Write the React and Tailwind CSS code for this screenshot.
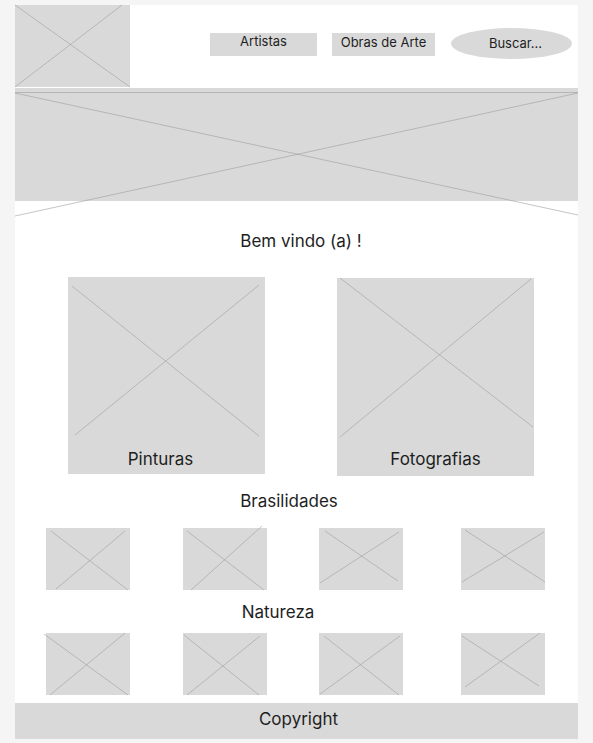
const LINE = "#9e9e9e";

function Placeholder({ w, h, lines, className = "", children }) {
  return (
    <div
      className={`relative bg-[#d9d9d9] ${className}`}
      style={{ width: w, height: h }}
    >
      <svg
        className="absolute inset-0 overflow-visible pointer-events-none"
        width={w}
        height={h}
      >
        {lines.map((l, i) => (
          <line
            key={i}
            x1={l[0]}
            y1={l[1]}
            x2={l[2]}
            y2={l[3]}
            stroke={LINE}
            strokeWidth="0.6"
          />
        ))}
      </svg>
      {children}
    </div>
  );
}

const row1 = [
  [[5, 3, 82, 62], [79, 3, 10, 61]],
  [[4, 3, 81, 62], [79, -2, 8, 62]],
  [[6, 3, 79, 53], [80, 4, 1, 55]],
  [[4, 2, 84, 54], [83, 4, 1, 54]],
];

const row2 = [
  [[-2, 1, 82, 62], [79, 0, 4, 62]],
  [[1, 2, 76, 62], [77, 3, 4, 62]],
  [[5, 3, 80, 62], [81, 3, 1, 61]],
  [[1, 3, 78, 53], [79, 0, 4, 54]],
];

function ThumbRow({ items }) {
  const margins = ["ml-[31px]", "ml-[53px]", "ml-[52px]", "ml-[58px]"];
  return (
    <div className="flex">
      {items.map((lines, i) => (
        <Placeholder key={i} w={84} h={62} lines={lines} className={margins[i]} />
      ))}
    </div>
  );
}

export default function App() {
  return (
    <div
      className="min-h-[743px] bg-[#f5f5f5] pt-[5px] pl-[15px] text-[#1e1e1e]"
      style={{ fontFamily: "Inter, 'Noto Sans', sans-serif" }}
    >
      <div className="w-[563px] bg-white">
        {/* Header */}
        <div className="flex items-start h-[82px]">
          <Placeholder w={115} h={82} lines={[[0, 0, 115, 82], [107, 0, 0, 82]]} />
          <div className="flex items-start ml-[80px] mt-[28px]">
            <div className="w-[107px] h-[23px] bg-[#d9d9d9] text-center text-[13px] leading-[16px]">
              Artistas
            </div>
            <div className="ml-[15px] w-[103px] h-[23px] bg-[#d9d9d9] text-center text-[13px] leading-[18px]">
              Obras de Arte
            </div>
            <div className="ml-[16px] -mt-[5px] w-[121px] h-[31px] rounded-[50%] bg-[#d9d9d9] flex items-center justify-center pl-[8px] text-[13px]">
              Buscar...
            </div>
          </div>
        </div>

        {/* Hero */}
        <Placeholder
          w={563}
          h={113}
          className="mt-[1px]"
          lines={[
            [0, 4.5, 563, 4.5],
            [0, 5, 563, 127],
            [0, 128, 563, 5],
          ]}
        />

        <p className="mt-[30px] text-center text-[17px] leading-[20px] pl-[9px]">
          Bem vindo (a) !
        </p>

        {/* Categorias */}
        <div className="flex items-start mt-[26px] pl-[53px]">
          <Placeholder
            w={197}
            h={197}
            lines={[[4, 9, 191, 159], [191, 8, 7, 158]]}
            className="flex items-end justify-center"
          >
            <span className="relative mb-[4px] mr-[12px] text-[17px] leading-[22px]">Pinturas</span>
          </Placeholder>
          <Placeholder
            w={197}
            h={198}
            lines={[[3, 0, 196, 149], [194, 1, 3, 159]]}
            className="ml-[72px] mt-[1px] flex items-end justify-center"
          >
            <span className="relative mb-[6px] text-[17px] leading-[22px]">Fotografias</span>
          </Placeholder>
        </div>

        <p className="mt-[15px] text-center text-[17px] leading-[20px] -ml-[15px]">
          Brasilidades
        </p>
        <div className="mt-[17px]">
          <ThumbRow items={row1} />
        </div>

        <p className="mt-[12px] text-center text-[17px] leading-[20px] -ml-[37px]">
          Natureza
        </p>
        <div className="mt-[11px]">
          <ThumbRow items={row2} />
        </div>

        {/* Footer */}
        <div className="mt-[8px] h-[36px] bg-[#d9d9d9] flex items-center justify-center pl-[4px] pb-[2px] text-[17px]">
          Copyright
        </div>
      </div>
    </div>
  );
}
